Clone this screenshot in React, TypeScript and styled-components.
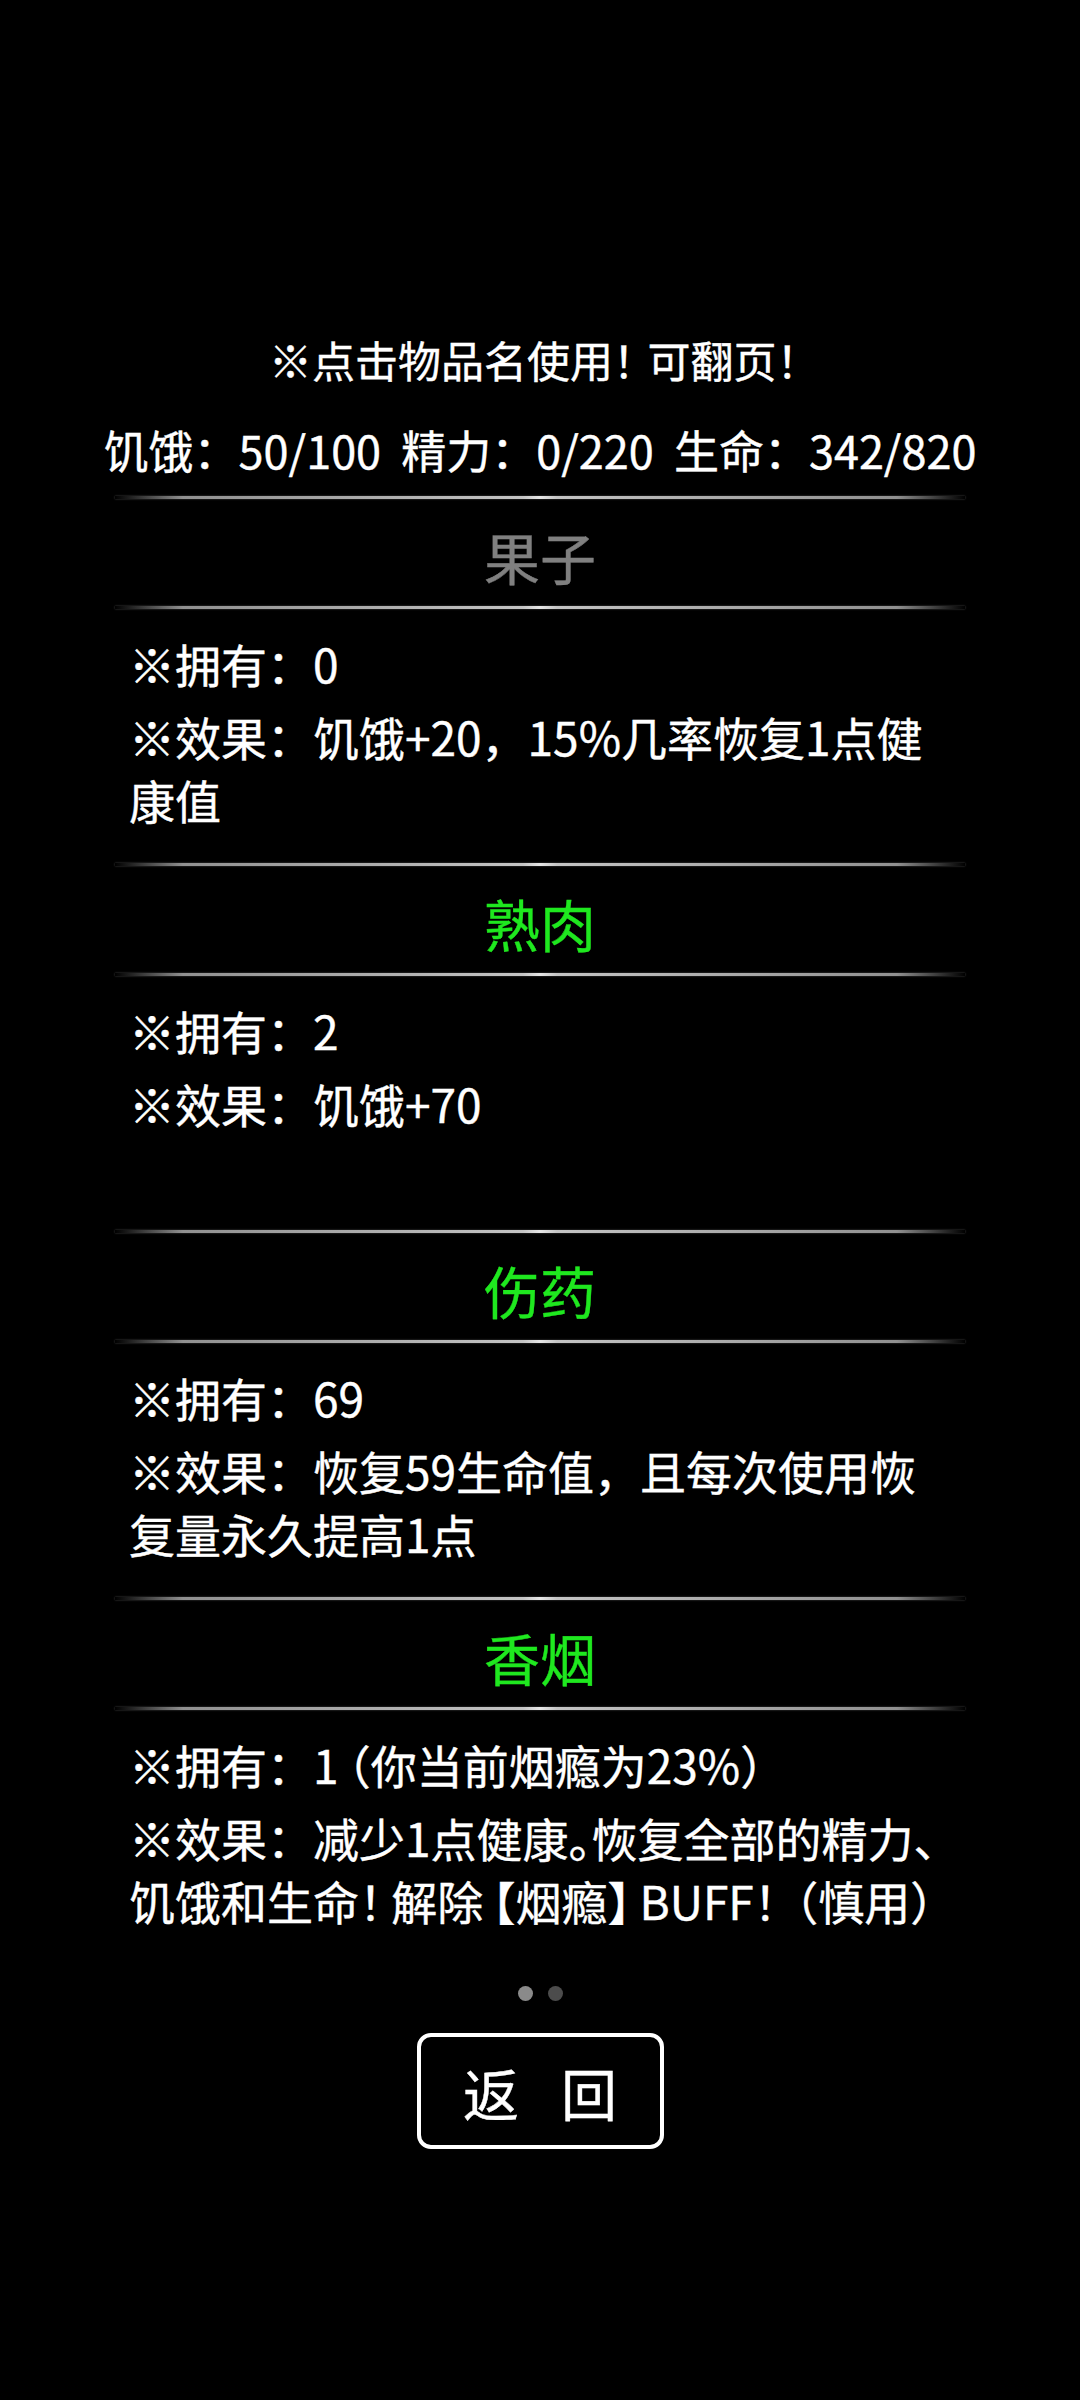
import React from 'react';
import styled, { createGlobalStyle } from 'styled-components';

const GlobalStyle = createGlobalStyle`
  html, body {
    margin: 0;
    padding: 0;
    background: #000;
  }
  body {
    font-family: "Noto Sans CJK SC", "Noto Sans", sans-serif;
    color: #fff;
  }
`;

const Screen = styled.div`
  min-height: 2400px;
  background: #000;
  display: flex;
  flex-direction: column;
  align-items: center;
  padding-top: 329px;
  box-sizing: border-box;
  -webkit-text-stroke: 0.4px currentColor;
`;

const Hint = styled.div`
  font-size: 43px;
  line-height: 60px;
  color: #fff;
`;

const Stats = styled.div`
  margin-top: 31px;
  font-size: 45px;
  line-height: 60px;
  color: #fff;
  white-space: pre;
`;

const ItemList = styled.div`
  width: 850px;
  margin-top: 16px;
  display: flex;
  flex-direction: column;
`;

const Divider = styled.div`
  height: 3px;
  background: linear-gradient(
    to right,
    rgba(200, 200, 200, 0) 0%,
    rgba(180, 180, 180, 0.8) 8%,
    #c4c4c4 48%,
    #e6e6e6 50%,
    #c4c4c4 52%,
    rgba(180, 180, 180, 0.8) 92%,
    rgba(200, 200, 200, 0) 100%
  );
  box-shadow: 0 0 2px rgba(120, 120, 120, 0.7);
`;

const ItemName = styled.div<{ $usable: boolean }>`
  height: 107px;
  display: flex;
  align-items: center;
  justify-content: center;
  padding-top: 6px;
  box-sizing: border-box;
  font-size: 56px;
  color: ${(p) => (p.$usable ? '#1fe81f' : '#808080')};
`;

const ItemBody = styled.div`
  height: 254px;
  box-sizing: border-box;
  padding: 23px 11px 0 14px;
`;

const Line = styled.p`
  margin: 0;
  font-size: 46px;
  line-height: 63px;
  color: #fff;

  & + & {
    margin-top: 10px;
  }
`;

// the game's font sets some CJK punctuation narrower than a full square
const Narrow = styled.span<{ $before?: number; $after?: number }>`
  font-feature-settings: "halt";
  margin-left: ${(p) => p.$before ?? 0}em;
  margin-right: ${(p) => p.$after ?? 0}em;
`;

const Dots = styled.div`
  margin-top: 22px;
  display: flex;
  gap: 15px;
`;

const Dot = styled.span<{ $active: boolean }>`
  width: 15px;
  height: 15px;
  border-radius: 50%;
  background: ${(p) => (p.$active ? '#8a8a8a' : '#4c4c4c')};
`;

const BackButton = styled.button`
  margin-top: 32px;
  width: 247px;
  height: 116px;
  box-sizing: border-box;
  border: 4px solid #fff;
  border-radius: 14px;
  background: #000;
  color: #fff;
  display: flex;
  align-items: center;
  justify-content: center;
  gap: 42px;
  font-family: "Noto Sans CJK SC", sans-serif;
  font-size: 56px;
  padding: 0;
  cursor: pointer;
  -webkit-text-stroke: 0.4px currentColor;
`;

type Item = {
  name: string;
  usable: boolean;
  owned: string;
  effect: string;
};

const items: Item[] = [
  { name: '果子', usable: false, owned: '0', effect: '饥饿+20，15%几率恢复1点健康值' },
  { name: '熟肉', usable: true, owned: '2', effect: '饥饿+70' },
  { name: '伤药', usable: true, owned: '69', effect: '恢复59生命值，且每次使用恢复量永久提高1点' },
  {
    name: '香烟',
    usable: true,
    owned: '1（你当前烟瘾为23%）',
    effect: '减少1点健康。恢复全部的精力、饥饿和生命！解除【烟瘾】BUFF！（慎用）',
  },
];

const NARROW = /([。、！【】（）])/;
const OPENING = '【（';
const CLOSING = '】）！';

const setText = (text: string) =>
  text.split(NARROW).map((part, i) => {
    if (!NARROW.test(part)) return <React.Fragment key={i}>{part}</React.Fragment>;
    return (
      <Narrow
        key={i}
        $before={OPENING.includes(part) ? 0.2 : 0}
        $after={CLOSING.includes(part) ? 0.2 : 0}
      >
        {part}
      </Narrow>
    );
  });

const App: React.FC = () => {
  return (
    <>
      <GlobalStyle />
      <Screen>
        <Hint>
          ※点击物品名使用<Narrow $after={0.3}>！</Narrow>可翻页<Narrow $after={0.3}>！</Narrow>
        </Hint>
        <Stats>{'饥饿：50/100  精力：0/220  生命：342/820'}</Stats>
        <ItemList>
          {items.map((item) => (
            <React.Fragment key={item.name}>
              <Divider />
              <ItemName $usable={item.usable}>{item.name}</ItemName>
              <Divider />
              <ItemBody>
                <Line>{setText(`※拥有：${item.owned}`)}</Line>
                <Line>{setText(`※效果：${item.effect}`)}</Line>
              </ItemBody>
            </React.Fragment>
          ))}
        </ItemList>
        <Dots>
          <Dot $active />
          <Dot $active={false} />
        </Dots>
        <BackButton>
          <span>返</span>
          <span>回</span>
        </BackButton>
      </Screen>
    </>
  );
};

export default App;
